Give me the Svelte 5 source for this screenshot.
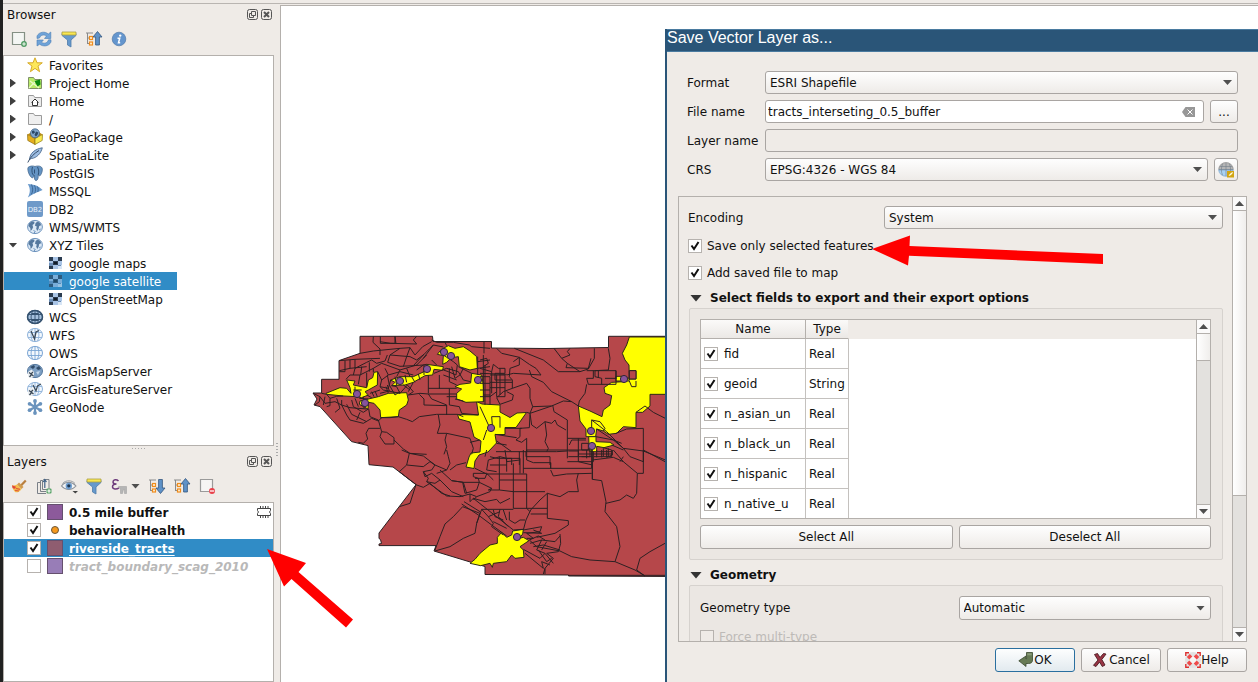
<script>
  const globe = (fill, line) =>
    `<ellipse cx="8" cy="8" rx="7.5" ry="6.6" fill="${fill}" stroke="${line}"/><path d="M1 5.5h14M1 10.5h14M8 1.5v13M5.5 2C3.6 6 3.6 10 5.5 14M10.5 2c1.9 4 1.9 8 0 12" fill="none" stroke="${line}" stroke-width=".9"/>`;
  const world =
    '<ellipse cx="8" cy="8" rx="7.4" ry="6.6" fill="#dce9f6" stroke="#6d93bd"/><path d="M2 4.5 5 2.3l2.5.4-.3 2L5.5 6l.6 2.2L5 10.5 3.6 12 3.3 9 1.4 7zM8.6 4l2-1.4 2.7 1.3.9 2.4-2 .8-.6 3-1.4 1.8-1-2.5.6-2-1.8-.6z" fill="#55799f"/><path d="M6.5 11.5l1.8 1-1.3 1.6M12 11l1.8-1" stroke="#6d93bd" fill="none"/>';
  const folder = (fill, line) =>
    `<path d="M1.5 2.5h5l1.3 2h6.7v9h-13z" fill="${fill}" stroke="${line}"/>`;
  const tiles =
    '<path fill="#d8e6f6" d="M0 2h13v12H0z"/><path fill="#2a3b50" d="M0 2h4v4H0zM9 2h4v4H9zM4 6h5v4H4zM0 11h4v3H0z"/><path fill="#a9c4e6" d="M4 2h5v4H4zM0 6h4v2H0zM9 6h4v4H9zM4 10h5v4H4z"/><path fill="#6d8fb8" d="M0 8h4v3H0zM9 10h3v1H9z"/><path fill="#111b28" d="M5 7h3v2H5z"/>';
  const funnel =
    '<path d="M1 2.5h14v2L10 9v7l-3.5-2V9L1 4.5z" fill="#6699cc" stroke="#4f7ba9" stroke-width=".8"/><path d="M1 1h14v3H1z" fill="#f9e64f" stroke="#a99f45" stroke-width=".8"/>';
  const treeLines =
    '<path d="M0 2h7M1.5 2v11M2 7h3M2 12.500h3" stroke="#8a8a8a" fill="none"/><rect x="3.500" y="5.500" width="3" height="3" fill="#fff1d6" stroke="#f08c1c" stroke-width="1.200"/><rect x="3.500" y="11" width="3" height="3" fill="#fff1d6" stroke="#f08c1c" stroke-width="1.200"/>';

  const icons = {
    addLayer:
      '<path d="M1.500 1.500h12v12h-12z" fill="#f4f6f3" stroke="#849084" stroke-width="1.200"/><circle cx="13" cy="13" r="2.900" fill="#4f9a62"/><path d="M11.200 13h3.600M13 11.200v3.600" stroke="#e8f4e8" stroke-width="1.200"/>',
    refresh:
      '<path d="M1 7.500V5C3 0.800 9 0 12.300 3L14.800 1v6.500H8.500L10.500 5C8 3.200 4.500 4 3.500 7z" fill="#6fa3d8" stroke="#4a7db5" stroke-width=".6"/><path d="M15 8.800V11c-2 4.500-8 5-11.300 2.200L1 15V9h6.400L5.500 11.200c2.500 1.800 6 1 7-2.400z" fill="#6fa3d8" stroke="#4a7db5" stroke-width=".6"/>',
    filter: funnel,
    collapse: treeLines + '<path d="M11.500 .5 16 6h-2.600V14H9.600V6H7z" fill="#5f92c8" stroke="#33567e" stroke-width=".8"/>',
    expand: treeLines + '<path d="M11.500 15.500 16 10h-2.600V1.500H9.600V10H7z" fill="#5f92c8" stroke="#33567e" stroke-width=".8"/>',
    info: '<circle cx="8" cy="8" r="6.800" fill="#6495cd" stroke="#5079a8" stroke-width=".7"/><circle cx="9.200" cy="4.600" r="1.200" fill="#fff"/><path d="M6.500 7.300h2.200L7.500 11.800h1.700" stroke="#fff" stroke-width="1.500" fill="none"/>',
    star: '<path d="M8 .8l2 5h5.300l-4.300 3.300 1.600 5.600L8 11.400l-4.600 3.300L5 9.100.7 5.800H6z" fill="#fde85a" stroke="#d2a31b" stroke-width=".9"/>',
    project: folder('#b9ec68', '#7f8f66') + '<path d="M2 13 9 6M3 6l9 7" stroke="#e9fbc8" stroke-width="1.300"/><path d="M7.500 6 13 4.500l.5 5-3 2z" fill="#0c8a12"/>',
    home: folder('#ececec', '#9a9a9a') + '<path d="M4.500 9.500 8 6 11.500 9.500M5.500 9v3.500h5V9" fill="#fff" stroke="#333" stroke-width="1"/>',
    folder: folder('#efefef', '#9a9a9a'),
    package:
      '<path d="M.5 5.500 8 9.500v6L.8 11.500z" fill="#e5ae1e" stroke="#8b6b10" stroke-width=".7"/><path d="M15.500 5.500 8 9.500v6l7.200-4z" fill="#fbea4f" stroke="#8b7a10" stroke-width=".7"/><path d="M.5 5.500 4 3.500l8-.2L15.500 5.500 8 9.600z" fill="#b98b16"/><circle cx="8" cy="4.300" r="4.500" fill="#80a5cb" stroke="#385b7e" stroke-width=".7"/><path d="M5 2 7 1.500l1 2-2 1.500-1-1zM9 2.500l2.400 1-1 2.500L9 7.500 7.500 6z" fill="#2b4866"/>',
    feather:
      '<path d="M2.500 12.500C3 6 8 2 15.300 .8 14 6.500 9.500 11 4.500 11.500z" fill="#9dbde2" stroke="#4b6a8e" stroke-width=".9"/><path d="M.8 15.500C3 10.500 7 6.500 12 3.500" stroke="#394f6b" fill="none"/>',
    elephant:
      '<path d="M1 2.500C3 .7 6 .7 8 1.500 11 .5 15 .9 15.300 4c.2 3-1.300 6-2.700 7l-1.400-1c.2 2.200-.2 5-1.800 5.500-1.700.3-2-1.500-2-4.500L5.500 13C2.800 12 .2 6 1 2.500z" fill="#6494c4" stroke="#47698f" stroke-width=".8"/><path d="M5.500 2c-1 3-.5 5 0 7l2 2M10.500 2c1.500 3 1.500 5 .7 8M7.500 4.500v4" stroke="#2f5278" fill="none"/>',
    mssql:
      '<path d="M.8 1C7 1 12 3 15.600 7 11 9 6 10.500 .8 14.500 3.500 9.500 3.500 5.500 .8 1z" fill="#6899cc"/><path d="M4.500 1.500c1.800 4 1.500 7-.2 10M7.500 2.300c1.400 3 1.200 6 .2 8M10.500 3.500c1 2.200.8 4 .2 5.500" stroke="#3e6996" fill="none"/>',
    db2: '<rect width="16" height="16" rx="2" fill="#6f9ac9"/><text x="8" y="10.500" text-anchor="middle" font-size="7" font-family="DejaVu Sans" fill="#eaf2fa">DB2</text>',
    world,
    tiles,
    wcs: globe('#a5c0dd', '#34516f') + '<path d="M5 4h6v2H5zM5 10h6v2H5z" fill="#34516f"/><ellipse cx="8" cy="8" rx="7.500" ry="6.600" fill="none" stroke="#34516f" stroke-width="1.500"/>',
    wfs: globe('#f3f8fd', '#8eb2da') + '<path d="M4 4l3.500 8 1.500-7 3-1.500" stroke="#3c4a58" stroke-width="1.300" fill="none"/>',
    ows: globe('#f3f8fd', '#7ba5d4'),
    arcmap: '<ellipse cx="8" cy="8" rx="7.500" ry="6.600" fill="#7d9fc3" stroke="#54779d"/><path d="M3 4l4-2 1 2-2 2zM9 5l3-2 2 3-3 1z" fill="#314d6b"/><path d="M9 9l4-1-2 4z" fill="#c4d8ec"/><path d="M1 9l3.500-2.500L7 9v4l-2 2-4-1z" fill="#e9eef2"/><path d="M2 9.500 4 11l2-2M2.500 14 4.500 11.500 6.500 13" stroke="#3c4a58" stroke-width="1.300" fill="none"/>',
    arcfeature: globe('#f3f8fd', '#8eb2da') + '<path d="M6 4l3 6 1.500-5L14 3" stroke="#3c4a58" stroke-width="1.200" fill="none"/><path d="M1 9l3.500-2.500L7 9v4l-2 2-4-1z" fill="#e9eef2"/><path d="M2 9.500 4 11l2-2M2.500 14 4.500 11.500 6.500 13" stroke="#3c4a58" stroke-width="1.300" fill="none"/>',
    geonode:
      '<path d="M8 2v12M2.500 4.800l11 6.400M2.500 11.200l11-6.400" stroke="#6a93bd" stroke-width="2.200"/><circle cx="8" cy="2" r="1.900" fill="#6a93bd"/><circle cx="8" cy="14" r="1.900" fill="#6a93bd"/><circle cx="2.600" cy="4.800" r="1.900" fill="#6a93bd"/><circle cx="13.400" cy="4.800" r="1.900" fill="#6a93bd"/><circle cx="2.600" cy="11.200" r="1.900" fill="#6a93bd"/><circle cx="13.400" cy="11.200" r="1.900" fill="#6a93bd"/>',
    style:
      '<path d="M14.800 2.500 10 7.500" stroke="#b9803f" stroke-width="2.200"/><path d="M8 4.500 12.500 9 10.500 11 6 6.500z" fill="#d09a4e"/><path d="M6 6.500 10.500 11C9 13.500 7 14.500 4.500 14.300 2.500 12.500 1.500 10.500 1 7.500 3 7.800 4.500 7.500 6 6.500z" fill="#f5bd4c"/><path d="M1 7.300l4 1.500-1 2-2.300-.5z" fill="#e0453a"/><path d="M4 12.300l4 .7M5 10.300l4 1" stroke="#e0603a" stroke-width="1.200"/>',
    group:
      '<path d="M4.500 4.500h-3v11H10M6.500 2.500h-2v11H10M7.500 1.500h5.500v10H6.500V2.500z" fill="none" stroke="#7a8088"/><path d="M8.800 1v9M7.200 4l1.600-2.500L10.500 4" stroke="#3f6288" stroke-width="1.200" fill="none"/><rect x="10.500" y="10.500" width="5" height="5" rx="1" fill="#59a469"/><path d="M11.300 13h3.400M13 11.300v3.400" stroke="#fff" stroke-width="1.200"/>',
    eye: '<path d="M.5 8C3 4 10 2.500 15 8c-4 4.500-10 5-14.500 0z" fill="#f4f4f4" stroke="#8c9299" stroke-width="1.100"/><circle cx="7.800" cy="8" r="3.200" fill="#6f9ed0"/><circle cx="7.800" cy="7.800" r="1.600" fill="#20364e"/><path d="M1.500 5.500C5 1.800 11 2 14 5.500" fill="none" stroke="#9aa0a6"/><path d="M11.500 13h5.500l-2.700 2.500z" fill="#444"/>',
    epsilon:
      '<path d="M7.500 3C5.500 1 2 1.500 2 3.900 2 5.300 3.500 6 5.500 6 3 6 1.500 7 1.500 8.800 1.500 11.300 5.500 11.800 8 9.800" fill="none" stroke="#6e3c7c" stroke-width="1.500"/><path d="M7.500 8.500h8v7h-2v-4h-1l-1 4h-2V11z" fill="#b5b5b5" stroke="#9a9a9a" stroke-width=".5"/>',
    remove:
      '<path d="M1.500 1.500h12v12h-12z" fill="#f6f5f4" stroke="#9a9a9a" stroke-width="1.200"/><circle cx="13" cy="13" r="3" fill="#e8404a"/><path d="M10.800 13h4.400" stroke="#fff" stroke-width="1.300"/>',
    crs: '<path d="M.7 7.500A7.300 7 0 0 1 15.300 7.500z" fill="#b5b5b5" stroke="#8b8b8b" stroke-width=".7"/><path d="M.7 7.800A7.300 6.500 0 0 0 15.300 7.800z" fill="#a8d2f4" stroke="#7ba5cc" stroke-width=".7"/><path d="M1 7.700h14M8 1v13M4.500 2c-1.500 4-1.500 8 0 11M11.500 2c1.500 4 1.500 8 0 11M2 4.500h12" stroke="#727d88" stroke-width=".6" fill="none"/><path d="M9 9h7v6.500H9z" fill="#d1a514"/><path d="M10.500 14c1-2 2.500-3.500 4.500-4-.5 2-2 3.500-4.500 4z" fill="#fffbe0"/>',
    ok: '<path d="M8.500 .5h6V8c0 2.500-1.500 3.500-4 3.500H8v3L.8 8.800 8 4v3c1 0 .5-1.500.5-2.500z" fill="#667a55" stroke="#38472d" stroke-width=".8"/><path d="M9.300 1.300h4.400v2H9.300z" fill="#8a9c79"/>',
    cancel: '<path d="M2.500 2.500 5.500 1.500l2.500 4 3.500-4 2.500.6L9.800 7.500l3.200 5.500-2.700 1.500-2.800-4.500-3.500 4.500-2.500-1.200L6 8z" fill="#9a3444" stroke="#49181f" stroke-width=".9"/>',
    help: '<circle cx="8" cy="8" r="5.800" fill="none" stroke="#e2e2e2" stroke-width="4.500"/><path d="M1.800 5l3-3 2.500 2.500-3 3zM14.200 5l-3-3-2.500 2.500 3 3zM1.800 11l3 3 2.500-2.500-3-3zM14.200 11l-3 3-2.500-2.500 3-3z" fill="#ef4a4a"/><path d="M.8 4V.8H4M12 .8h3.200V4M.8 12v3.200H4M12 15.200h3.200V12" fill="none" stroke="#dc3030" stroke-width="1.400"/>',
  };

  const browserTools = [
    ['addLayer', 'Add Selected Layers'],
    ['refresh', 'Refresh'],
    ['filter', 'Filter Browser'],
    ['collapse', 'Collapse All'],
    ['info', 'Properties'],
  ];

  const tree = [
    { name: 'Favorites', icon: 'star' },
    { name: 'Project Home', icon: 'project', state: 'closed' },
    { name: 'Home', icon: 'home', state: 'closed' },
    { name: '/', icon: 'folder', state: 'closed' },
    { name: 'GeoPackage', icon: 'package', state: 'closed' },
    { name: 'SpatiaLite', icon: 'feather', state: 'closed' },
    { name: 'PostGIS', icon: 'elephant' },
    { name: 'MSSQL', icon: 'mssql' },
    { name: 'DB2', icon: 'db2' },
    { name: 'WMS/WMTS', icon: 'world' },
    { name: 'XYZ Tiles', icon: 'world', state: 'open' },
    { name: 'google maps', icon: 'tiles', child: true },
    { name: 'google satellite', icon: 'tiles', child: true },
    { name: 'OpenStreetMap', icon: 'tiles', child: true },
    { name: 'WCS', icon: 'wcs' },
    { name: 'WFS', icon: 'wfs' },
    { name: 'OWS', icon: 'ows' },
    { name: 'ArcGisMapServer', icon: 'arcmap' },
    { name: 'ArcGisFeatureServer', icon: 'arcfeature' },
    { name: 'GeoNode', icon: 'geonode' },
  ];
  let selectedSource = $state('google satellite');

  let layers = $state([
    { name: '0.5 mile buffer', on: true, color: '#8c5a9b', memory: true },
    { name: 'behavioralHealth', on: true, point: true },
    { name: 'riverside_tracts', on: true, color: '#8f5d70', current: true },
    { name: 'tract_boundary_scag_2010', on: false, color: '#987db7' },
  ]);

  let fields = $state([
    { name: 'fid', type: 'Real', on: true },
    { name: 'geoid', type: 'String', on: true },
    { name: 'n_asian_un', type: 'Real', on: true },
    { name: 'n_black_un', type: 'Real', on: true },
    { name: 'n_hispanic', type: 'Real', on: true },
    { name: 'n_native_u', type: 'Real', on: true },
  ]);
  const setAll = (on) => fields.forEach((f) => (f.on = on));

  let fileName = $state('tracts_interseting_0.5_buffer');

  // Clinic buffers, in canvas coordinates.
  const clinics = [
    [444, 352], [451, 356], [427, 369], [400, 381], [357, 394], [365, 403],
    [478, 380], [491, 428], [624, 379], [591, 431], [592, 446], [517, 537],
  ];
</script>

{#snippet icon(name)}
  <svg class="icon" viewBox="0 0 16 16" aria-hidden="true">{@html icons[name]}</svg>
{/snippet}

{#snippet dockTitle(title)}
  <header class="dock-title">
    <h2>{title}</h2>
    <button aria-label="Float {title}">
      <svg viewBox="0 0 11 11"><rect x=".5" y=".5" width="10" height="10" rx="2" /><path d="M4.500 2.500h4v4h-4zM4.500 4.500h-2v4h4v-2" /></svg>
    </button>
    <button aria-label="Close {title}">
      <svg viewBox="0 0 11 11"><rect x=".5" y=".5" width="10" height="10" rx="2" /><path class="heavy" d="M3 3l5 5M8 3l-5 5" /></svg>
    </button>
  </header>
{/snippet}

{#snippet scrollbar(kind)}
  <div class="scrollbar {kind}">
    <button aria-label="Scroll up"><i class="tri up"></i></button>
    <div class="thumb"></div>
    <div class="trough"></div>
    <button aria-label="Scroll down"><i class="tri"></i></button>
  </div>
{/snippet}

<div class="app">
  <div class="edge"></div>
  <aside>
    <section class="browser">
      {@render dockTitle('Browser')}
      <div class="toolbar">
        {#each browserTools as [name, label]}
          <button aria-label={label}>{@render icon(name)}</button>
        {/each}
      </div>
      <ul class="list sources">
        {#each tree as node}
          <li class:child={node.child} class:selected={node.name === selectedSource}>
            <span class="twist">
              {#if node.state}<button class={node.state} aria-label="Toggle {node.name}"></button>{/if}
            </span>
            {@render icon(node.icon)}
            <button class="name" onclick={() => (selectedSource = node.name)}>{node.name}</button>
          </li>
        {/each}
      </ul>
    </section>
    <div class="splitter"></div>
    <section class="layers">
      {@render dockTitle('Layers')}
      <div class="toolbar">
        <button aria-label="Open Layer Styling">{@render icon('style')}</button>
        <button aria-label="Add Group">{@render icon('group')}</button>
        <button aria-label="Manage Map Themes">{@render icon('eye')}</button>
        <button aria-label="Filter Legend">{@render icon('filter')}</button>
        <button class="with-menu" aria-label="Filter by Expression">{@render icon('epsilon')}<i class="tri"></i></button>
        <button aria-label="Expand All">{@render icon('expand')}</button>
        <button aria-label="Collapse All">{@render icon('collapse')}</button>
        <button aria-label="Remove Layer">{@render icon('remove')}</button>
      </div>
      <ul class="list">
        {#each layers as layer, i}
          <li class="layer" class:selected={layer.current} class:off={!layer.on}>
            <input type="checkbox" id="layer-{i}" bind:checked={layer.on} />
            {#if layer.point}
              <span class="swatch point"></span>
            {:else}
              <span class="swatch" style:background={layer.color}></span>
            {/if}
            <label for="layer-{i}">{layer.name}</label>
            {#if layer.memory}
              <svg class="chip" viewBox="0 0 14 12" aria-label="Temporary layer"><path d="M.5 2.500h13v2l-1 1.500 1 1.500v2H.5v-2l1-1.500-1-1.500zM3.500 0v2M6 0v2M8.500 0v2M11 0v2M3.500 10v2M6 10v2M8.500 10v2M11 10v2" /></svg>
            {/if}
          </li>
        {/each}
      </ul>
    </section>
  </aside>
  <div class="side-splitter"></div>

  <main>
    <svg class="map" aria-label="Riverside tracts map">
      <g transform="translate(-281 -6)">
        <path class="land" d="M360 336.300H432.500L433 341.500H491.500V348L546 348.500 608.500 347.500V336.300H680V576.500L568.500 576V575L485 574.500V566.500L434 551 436 545.600H379V544L381.500 543.500 380.500 539.500 379 538.500V533L416 484.700 393 467 369 464.700 368 445.600 351.600 441.600 320 406.600 314 405 317 399 313 393H321.600V379.300H339V360.600L360 353.300z" />
        <g class="chosen">
          <path d="M457.500 414.500 478.500 415 476.500 401.500 482 404 500 405V412L510 417.500 517 413 526.500 412.500 516 427.500H505V434.500H495L496.500 443 488 452 479 455 475 461 474 468.500 466 467 469 457 471 453 480 452 481 441 474 437 470 422 459 419z" />
        </g>
        <g transform="translate(300 325) scale(.33333)">
          <g class="chosen">
            <path d="M430 70 445 62 465 70 490 65 510 78 530 95 532 130 510 135 478 125 475 95 455 98 440 112 428 118 430 92 412 88 420 78z" />
            <path d="M78 205 120 188 140 190 153 205 150 188 140 165 165 168 160 180 200 188 205 165 218 158 222 142 233 140 232 180 205 195 195 200 205 210 185 218 172 215 130 213 80 208z" />
            <path d="M180 228 205 222 235 215 265 205 320 203 325 225 320 240 298 255 295 275 242 278 240 255 222 235 206 232 204 252 178 238z" />
            <path d="M272 165 300 155 340 155 372 140 380 118 430 125 428 136 402 133 398 150 375 152 340 172 315 180 275 182 285 172z" />
            <path d="M465 185 480 178 512 174 515 145 545 150 550 180 552 230 498 232 470 222 470 205 485 192z" />
          </g>
          <g class="lines">
            <path d="M220 34 219 52 240 72 240 90M241 34V55H285V34M240 50 272 55 350 57 340 45 350 34M180 85 220 78 300 70 330 68 345 90 368 65 395 50M300 70 270 90 263 112 300 124 340 122 372 88 390 70 400 60 430 66M270 90 330 95 350 105 372 88M330 68 320 95 310 125M118 107 165 103 240 100M150 105V130M165 103V130L200 112 215 105 230 115 255 108 262 90M118 137 150 130 200 125M135 107V140H118M138 163 150 150 180 150 220 130 245 115 300 135 350 120 380 90M180 150 175 178M200 143 200 185M220 130V142M233 140 245 165 240 185 250 195M245 165 265 150 255 130M265 150 300 140 340 150M240 185 265 190 272 165M250 195 300 205 322 180M262 150 268 180 285 210M208 112 208 140M185 125 182 150M165 130 160 150M300 135 290 155M320 130 330 155M340 122 370 120 380 118M430 90 460 110 472 120 468 150 445 140 430 135M395 105 410 120M350 135 370 120M400 60 370 100M285 34 288 57" />
            <path d="M40 205 60 215 75 235 105 230 125 240 150 248 200 252M65 205 80 208 90 220 110 214 130 213M60 215 58 230 45 240M75 215 70 240M90 220V242L80 245M110 220 120 250 105 262M125 225V240L140 270 150 285 190 295 215 280 235 288M140 238 155 268 200 290M155 225 160 245 190 262 205 252M165 220 175 245M180 262 170 285M206 252 210 275 235 285 245 320 240 335 255 357 282 357 282 338 260 322 245 320M235 288 245 278M206 310 240 310M206 310 198 325 203 342 190 355 175 352M242 278 270 278 295 275 320 283 337 290 358 275 410 268 472 268 490 275M415 270 420 300 412 325 440 325 435 345 440 365 432 388M440 325 510 340 520 370 515 388M510 352 540 345M282 345 310 372 330 385 380 388M465 222 490 228M325 210 360 205 385 207 395 222 440 240 440 270M358 208 372 222 372 240 440 242M385 207 470 207M340 172 325 200M385 150V205M418 150V190H470M385 190 420 190M448 130V170L470 180M448 190V240M448 240 478 245 485 265 535 270M470 215 440 215M402 145 440 130 475 140 490 165 512 170M455 125 465 160 480 150 490 130M430 150 470 165M475 125 515 145M533 95 533 150M533 130 570 125M533 110 570 105M550 90V230M552 210 570 210M435 52 440 62M395 45 410 52 460 52 508 60 515 65 570 70M552 50V85" />
            <path d="M240 205 268 198 262 180M265 205 258 185M285 210 300 200M300 205 290 185 275 182M322 180 340 200 325 210M310 180 330 195M210 205 240 195M200 210 215 218M215 200 222 215M225 198 232 215M285 155 290 180M315 150 320 172M335 155 345 172M355 147 360 165M372 118V150M160 195 185 195M165 185V215M178 220 205 222M190 215 192 250" />
          </g>
        </g>
        <g transform="translate(480 325) scale(.33333)">
          <g class="chosen">
            <path d="M448 36H570V208H510V243L488 262H468V308L430 305 410 325 385 328 370 318 350 312 347 335H318V312L300 288 295 243 330 258 366 275 370 255 390 240 395 212 375 205 372 188 395 172 432 170 448 165 447 120 435 105 427 85 440 60z" />
            <path d="M326 335H348V350L390 352 402 360 372 368 350 364V380H328z" />
            <path d="M408 154H432L447 160V168H408z" />
          </g>
          <g class="lines">
            <path d="M50 70 65 85 118 97 148 118 168 130 183 150 100 145 80 150M103 70 190 105 235 140 300 140 325 132 343 100 343 70M222 70 245 100 262 115 300 140M245 100 270 90 262 80 270 70M262 115 258 128 325 130 333 100M385 70 390 100 385 135 345 137M320 137H408V162M408 137V178H325L320 160H340V137M345 137V155L365 160 365 178M355 137V158M320 178 315 205 298 228 295 243 275 230 215 200 190 172 155 155 148 135M100 110 118 97 118 120 90 130 88 155 97 165 97 190 140 175 150 190 150 220 158 245 150 265 140 262M158 245 215 243 250 228 275 230M218 240 222 260 262 285 262 400M215 243 150 265 155 300 170 310 195 290 215 295 225 285 232 300 258 315M50 218 70 200 97 190M50 218 60 238 97 225 100 210 80 200M150 268 148 308 120 310 120 335 108 345 125 352 140 340 140 380H230L262 378M195 290 200 330 195 350 205 370 200 380M75 310 125 310M45 328 110 338M50 348 95 380 140 380M48 380H95M30 395 50 400 95 400 95 420M118 380V420M138 380V395H210V420M10 125 25 115 20 100 0 105M0 130 35 140 40 118 55 130 75 130 75 145 45 145 45 165 95 165M0 155H30V240M15 120V240M30 150H75V215H50V150M30 172H97M30 188H75M50 200 30 215M0 145 80 148M0 175H30M0 195H30M0 215H30M35 140 35 205M60 130V210M262 340H318M268 360 275 345H318M295 340V395H330V365M305 355H325V375H305zM265 378H295M265 395H295M340 380V395H395V375L370 368M370 370V395M385 370V395M350 380H395M262 410H340V395M335 285V312M335 285 360 290 375 310 370 318M335 285 380 320 430 370M350 312 400 345 430 370 490 378 520 390 556 405M408 325 440 312 490 310 490 410 450 395 430 370M348 335 400 345 425 355M395 360 430 375M448 137H468V162H448zM468 168V185H455L448 168M468 262 495 243 520 262 556 280M0 245 30 310M35 275H60V308M35 275 37 300M20 315 10 345M50 355 80 360M430 395 420 410M375 160H408" />
            <path class="land" d="M448 137H468V162H448z" />
          </g>
        </g>
        <g transform="translate(360 450) scale(.33333)">
          <g class="chosen">
            <path d="M330 340 345 328 360 310 390 285 412 280 412 262 425 247 440 262 455 255 458 243 490 238 488 252 478 265 490 262 507 272 480 290 490 300 492 322 465 325 455 315 440 335 400 340 397 352 390 340 362 347z" />
          </g>
          <g class="lines">
            <path d="M125 0 148 10 190 18 225 45 260 60 270 40 265 20 260 0M148 10 140 45 118 65M140 45 190 50 210 35 225 45 215 60 190 65 205 85 200 95 235 120 260 138 300 140 330 132 330 155M118 65 150 90 170 105 190 112 210 100 245 130 270 138M190 65 195 80 215 70 240 90 225 100 200 95M240 60 275 92 310 97 320 130M240 90 275 125 310 140M260 60 230 70M270 60 290 45 318 38M275 92 310 97 358 97 350 120 315 130 308 97M358 97 395 115 390 125 350 140 330 132M168 104 150 160 118 170M308 170 280 200 255 222 240 260 225 300M308 170 360 190 350 220 345 250 310 265 270 290 225 303M312 155 360 185M305 162 355 195 395 225 440 258M340 145 460 240 488 238M330 155 340 145 375 155 410 148 420 160 450 145M350 140 340 150M358 97 355 85 340 80 340 70 380 70 400 90M345 55 380 72H500V175M380 72 375 85 345 85M385 30 380 60 410 65M385 30 420 20 440 25 480 25V70M390 45H440M380 0 375 20M418 20V120H385L395 115M418 90H500M460 40V175M418 120 460 125 555 125M440 25V65M435 0 440 35 480 30M490 0V70M490 55H695V0M500 0 500 30 520 38H572V55M500 0H695M572 38V55M572 60 580 78 620 72 695 70M655 70 650 90 655 125 625 125 600 140 562 130 540 150 512 180 498 210 490 240M562 130V205L625 212 625 225 585 250 530 262M500 175 510 185M460 178H365L350 220M460 175H562M512 192H562M365 178 385 200 400 220 395 230 430 255M400 180 405 200 430 210M420 178 415 200 445 230M430 180 440 210M448 185V210L465 220 480 210 495 210M400 215 440 235M385 200 420 185M697 0V88L725 92 738 155 735 185 770 230 780 290 765 335 690 330 635 320 600 303 530 290 508 270M697 88V30L760 22 790 35 832 70 850 70V0M832 70 830 130 820 145 800 135 780 150 738 160M790 35 760 0M850 0 915 35M655 0 655 35 697 45M665 20H697M680 0V25M710 0V22M725 0V22M740 0V22M657 12H757M740 22 757 15V0M915 280 870 305 840 325 830 360 855 378M765 335 825 360 855 378M490 240 545 230 540 245 500 250 520 265 500 265M490 248 545 250 520 240M600 252 602 280 595 305 560 310 580 325 555 355 550 372M495 310 550 355 545 335 570 345M490 298 540 325 555 310 580 340M510 280 545 270 585 275 600 258M520 290 550 285 600 300M545 270 530 300 555 310M560 275 545 300M508 270 535 258 555 270M535 300 560 335 575 325M555 355V372M625 376H915" />
          </g>
        </g>
        {#each clinics as [cx, cy]}
          <circle {cx} {cy} r="3.600" />
        {/each}
      </g>
    </svg>
  </main>

  <section class="dialog" role="dialog" aria-labelledby="dialog-title">
    <h1 id="dialog-title">Save Vector Layer as...</h1>
    <div class="form">
      <label for="format">Format</label>
      <span class="select"><select id="format"><option>ESRI Shapefile</option></select></span>

      <label for="file">File name</label>
      <div class="field-row">
        <div class="text-field">
          <input id="file" type="text" bind:value={fileName} />
          <button class="clear" aria-label="Clear" onclick={() => (fileName = '')}>
            <svg viewBox="0 0 13 10"><path d="M3.500 0H13v10H3.500L0 5z" fill="#979797" /><path d="M5.500 2.500l5 5M10.500 2.500l-5 5" stroke="#fff" /></svg>
          </button>
        </div>
        <button class="push browse">...</button>
      </div>

      <label for="layer-name">Layer name</label>
      <input id="layer-name" class="disabled-text" type="text" disabled />

      <label for="crs">CRS</label>
      <div class="field-row crs">
        <span class="select"><select id="crs"><option>EPSG:4326 - WGS 84</option></select></span>
        <button class="push pick" aria-label="Select CRS">{@render icon('crs')}</button>
      </div>
    </div>

    <div class="scroll-area">
      <div class="options">
        <div class="encoding">
          <label for="encoding">Encoding</label>
          <span class="select"><select id="encoding"><option>System</option></select></span>
        </div>
        <div class="check"><input type="checkbox" id="only-selected" checked /><label for="only-selected">Save only selected features</label></div>
        <div class="check"><input type="checkbox" id="add-to-map" checked /><label for="add-to-map">Add saved file to map</label></div>

        <h3><i class="tri fold"></i>Select fields to export and their export options</h3>
        <div class="group">
          <div class="fields">
            <div class="cells">
              <table>
                <thead><tr><th>Name</th><th>Type</th></tr></thead>
                <tbody>
                  {#each fields as field, i}
                    <tr>
                      <td><div class="cell"><input type="checkbox" id="field-{i}" bind:checked={field.on} /><label for="field-{i}">{field.name}</label></div></td>
                      <td>{field.type}</td>
                    </tr>
                  {/each}
                </tbody>
              </table>
            </div>
            {@render scrollbar('inner')}
          </div>
          <div class="pair">
            <button class="push" onclick={() => setAll(true)}>Select All</button>
            <button class="push" onclick={() => setAll(false)}>Deselect All</button>
          </div>
        </div>

        <h3><i class="tri fold"></i>Geometry</h3>
        <div class="group">
          <div class="pair">
            <label for="geometry">Geometry type</label>
            <span class="select tall"><select id="geometry"><option>Automatic</option></select></span>
          </div>
          <div class="check muted"><input type="checkbox" id="multi" disabled /><label for="multi">Force multi-type</label></div>
        </div>
      </div>
      {@render scrollbar('outer')}
    </div>

    <footer>
      <button class="push default">{@render icon('ok')}OK</button>
      <button class="push spaced">{@render icon('cancel')}Cancel</button>
      <button class="push">{@render icon('help')}Help</button>
    </footer>
  </section>

  <svg class="arrows" aria-hidden="true">
    <path d="M872 249 910 235.500 909.500 246 1103 254V264L909 255.700 908 265.500z" />
    <path d="M267 549 306 563 298.500 572 353 619.500 346 627.500 291.500 579 284 586.500z" />
  </svg>
</div>

<style>
  :global(body) {
    margin: 0;
    overflow: hidden;
  }
  .app {
    position: relative;
    display: flex;
    box-sizing: border-box;
    height: 100vh;
    padding-top: 4px;
    background: linear-gradient(#efebe7 3px, #b9b5b1 3px, #b9b5b1 4px, #efebe7 4px);
    font: 12px/18px 'DejaVu Sans', sans-serif;
    color: #111;
  }
  .app :where(*) {
    box-sizing: border-box;
  }
  button, input, select {
    margin: 0;
    padding: 0;
    border: 0;
    background: none;
    font: inherit;
    color: inherit;
  }
  h1, h2, h3, ul {
    margin: 0;
    padding: 0;
    font-size: 12px;
    list-style: none;
  }
  .icon {
    display: block;
    flex: none;
    width: 16px;
    height: 16px;
    overflow: visible;
  }
  .edge {
    flex: none;
    width: 3px;
    margin-top: -4px;
    background: #212121;
  }
  aside {
    display: flex;
    flex: none;
    flex-direction: column;
    width: 271px;
  }
  aside section {
    display: flex;
    flex-direction: column;
  }
  .browser {
    flex: 442 0 0;
  }
  .layers {
    flex: 231 0 0;
  }
  .dock-title {
    display: flex;
    gap: 3px;
    align-items: center;
    height: 21px;
    padding: 0 2px 0 4px;
  }
  .dock-title h2 {
    flex: 1;
    font-weight: 400;
  }
  .dock-title button, .dock-title svg {
    display: block;
    width: 11px;
    height: 11px;
    fill: none;
    stroke: #555;
  }
  .heavy {
    stroke-width: 2;
  }
  .toolbar {
    display: flex;
    gap: 9px;
    align-items: center;
    height: 30px;
    padding: 0 8px 2px;
  }
  .with-menu {
    display: flex;
    gap: 4px;
    align-items: center;
  }
  .tri {
    display: block;
    width: 9px;
    height: 5px;
    background: #4f4f4f;
    clip-path: polygon(0 0, 100% 0, 50% 100%);
  }
  .tri.up {
    clip-path: polygon(0 100%, 100% 100%, 50% 0);
  }
  .tri.fold {
    width: 12px;
    height: 7px;
    background: #333;
  }
  .list {
    flex: 1;
    overflow: hidden;
    border: 1px solid #b4b0ac;
    background: #fff;
  }
  .list li {
    display: flex;
    align-items: center;
    height: 18px;
  }
  .sources li {
    width: fit-content;
    padding-right: 16px;
  }
  .twist {
    display: flex;
    justify-content: center;
    width: 18px;
    margin-right: 5px;
  }
  .child .twist {
    margin-right: 27px;
  }
  .twist button {
    width: 6px;
    height: 9px;
    background: #3f3f3f;
    clip-path: polygon(0 0, 100% 50%, 0 100%);
  }
  .twist .open {
    width: 9px;
    height: 5px;
    clip-path: polygon(0 0, 100% 0, 50% 100%);
  }
  .name {
    margin-left: 6px;
  }
  .child .name {
    margin-left: 4px;
  }
  .name, .layer label {
    padding-top: 2px;
  }
  li.selected {
    background: #308cc6;
    color: #fff;
  }
  .sources .selected .icon {
    opacity: 0.6;
  }
  input[type='checkbox'] {
    flex: none;
    width: 14px;
    height: 14px;
    border: 1px solid #b6b2ae;
    background: #fff;
    appearance: none;
  }
  input[type='checkbox']:checked {
    background: #fff url("data:image/svg+xml,%3Csvg xmlns='http://www.w3.org/2000/svg' viewBox='0 0 12 12'%3E%3Cpath d='M2.500 5.500 5 9 9.500 2' fill='none' stroke='%23111' stroke-width='2'/%3E%3C/svg%3E");
  }
  input[type='checkbox']:disabled {
    background: #efebe7;
  }
  .layer {
    gap: 6px;
    padding: 0 2px 0 23px;
    font-weight: 700;
  }
  .layer label {
    flex: 1;
  }
  .layer.selected label {
    text-decoration: underline;
    text-underline-offset: 2px;
  }
  .layer.off label {
    color: #b8b8b8;
    font-style: italic;
  }
  .swatch {
    width: 16px;
    height: 16px;
    border: 1px solid #65506e;
  }
  .swatch.point {
    width: 8px;
    height: 8px;
    margin: 0 4px;
    border: 1px solid #6b5638;
    border-radius: 50%;
    background: #f5991e;
  }
  .chip {
    width: 14px;
    height: 12px;
    fill: none;
    stroke: #444;
  }
  .splitter {
    height: 5px;
    margin: 0 127px;
    background: radial-gradient(circle, #aaa 0 0.8px, transparent 1px) center / 3px 5px repeat-x;
  }
  .side-splitter {
    flex: none;
    width: 6px;
    height: 17px;
    margin-top: 437px;
    background: radial-gradient(circle, #aaa 0 0.8px, transparent 1px) center / 6px 3px repeat-y;
  }
  main {
    flex: 1;
    margin-top: 1px;
    border: solid #b4b0ac;
    border-width: 1px 0 0 1px;
    background: #fff;
  }
  .map {
    display: block;
    width: 100%;
    height: 100%;
  }
  .land {
    fill: #b6474a;
    stroke: #2b2022;
  }
  .chosen {
    fill: #ff0;
    stroke: #2c2c14;
    stroke-width: 1;
  }
  g[transform*='scale'] .chosen {
    stroke-width: 3;
  }
  .lines {
    fill: none;
    stroke: #2b2022;
    stroke-width: 3;
  }
  circle {
    fill: #87549b;
    stroke: #332638;
  }
  .dialog {
    position: absolute;
    inset: 29px 0 0 665px;
    display: flex;
    flex-direction: column;
    border-left: 2px solid #2a5578;
    background: #efebe7;
  }
  .dialog h1 {
    height: 23px;
    border: solid #4a7ba0;
    border-width: 1px 0;
    background: #2a5578;
    color: #fff;
    font: 16px/16px 'Liberation Sans', sans-serif;
  }
  .form {
    display: grid;
    grid-template-columns: 72px 1fr;
    gap: 6px;
    align-items: center;
    padding: 19px 20px 15px;
  }
  .form label {
    white-space: nowrap;
  }
  .field-row {
    display: grid;
    grid-template-columns: 1fr 28px;
    gap: 6px;
  }
  .field-row.crs {
    grid-template-columns: 1fr 24px;
  }
  .select {
    display: grid;
    align-items: center;
  }
  .select select, .select::after {
    grid-area: 1 / 1;
  }
  .select::after {
    justify-self: end;
    width: 9px;
    height: 5px;
    margin-right: 6px;
    background: #4f4f4f;
    clip-path: polygon(0 0, 100% 0, 50% 100%);
    content: '';
    pointer-events: none;
  }
  select, .push, .text-field, .disabled-text {
    height: 23px;
    border: 1px solid #a9a5a2;
    border-radius: 3px;
    background: linear-gradient(#fefefe, #eeebe8);
  }
  select {
    width: 100%;
    padding-left: 4px;
    appearance: none;
  }
  .tall select {
    height: 24px;
  }
  .text-field {
    display: flex;
    align-items: center;
    padding: 0 8px 0 2px;
    background: #fff;
  }
  .text-field input {
    flex: 1;
    outline: 0;
  }
  .clear, .clear svg {
    display: block;
    width: 13px;
    height: 10px;
  }
  .disabled-text {
    width: 100%;
    background: #efebe7;
  }
  .push {
    display: flex;
    align-items: center;
    justify-content: center;
  }
  .scroll-area {
    display: flex;
    flex: 1;
    min-height: 0;
    margin: 0 11px;
    border: 1px solid #b4b0ac;
    overflow: hidden;
  }
  .options {
    flex: 1;
    padding: 9px 9px 0;
  }
  .encoding {
    display: grid;
    grid-template-columns: 196px 1fr;
    align-items: center;
    margin-bottom: 8px;
  }
  .check {
    display: flex;
    gap: 5px;
    align-items: center;
    margin-bottom: 9px;
  }
  .muted {
    color: #bdbab7;
  }
  h3 {
    display: flex;
    gap: 8px;
    align-items: center;
    padding: 0 2px;
  }
  .options .check + h3 {
    margin-top: -2px;
  }
  .group {
    margin: 1px 0 6px 1px;
    padding: 10px 11px 10px 10px;
    border: 1px solid #d6d2ce;
    border-radius: 2px;
    background: #ebe7e3;
  }
  .group .check {
    margin: 8px 0 0;
  }
  .fields {
    display: flex;
    height: 200px;
    margin-bottom: 6px;
    border: 1px solid #b4b0ac;
  }
  .cells {
    flex: 1;
    overflow: hidden;
    background: linear-gradient(#efebe7 19px, #fff 19px);
  }
  table {
    border-spacing: 0;
  }
  th {
    height: 19px;
    padding: 0;
    border: solid #b4b0ac;
    border-width: 0 1px 1px 0;
    background: linear-gradient(#fbfaf9, #ebe8e5);
    font-weight: 400;
  }
  th:last-child {
    border-right-color: #efebe7;
  }
  td {
    height: 30px;
    padding: 0 3px;
    border: solid #c4c1be;
    border-width: 0 1px 1px 0;
  }
  th:first-child {
    width: 105px;
  }
  th:last-child {
    width: 43px;
  }
  .cell {
    display: flex;
    gap: 6px;
    align-items: center;
  }
  .pair {
    display: grid;
    grid-template-columns: 1fr 1fr;
    gap: 6px;
    align-items: center;
  }
  .pair .push {
    height: 24px;
  }
  .scrollbar {
    display: flex;
    flex: none;
    flex-direction: column;
    width: 14px;
    border-left: 1px solid #b4b0ac;
    background: #e3e1de;
  }
  .scrollbar button {
    display: grid;
    flex: none;
    place-items: center;
    height: 13px;
    background: #fbfafa;
  }
  .thumb {
    flex: 285 0 0;
    border: solid #b4b0ac;
    border-width: 1px 0;
    background: linear-gradient(90deg, #fff, #f0eeec);
  }
  .trough {
    flex: 131 0 0;
    border-bottom: 1px solid #b4b0ac;
  }
  .inner .thumb {
    flex-grow: 26;
  }
  .inner .trough {
    flex-grow: 146;
  }
  footer {
    display: flex;
    gap: 6px;
    justify-content: flex-end;
    padding: 6px 11px 10px;
  }
  footer .push {
    width: 80px;
    height: 24px;
  }
  footer .default {
    border-color: #2a6f9f;
    background: linear-gradient(#fdfefe, #e2eaef);
  }
  .spaced {
    gap: 1px;
  }
  .arrows {
    position: absolute;
    inset: 0;
    width: 100%;
    height: 100%;
    fill: #f00;
    pointer-events: none;
  }
</style>
